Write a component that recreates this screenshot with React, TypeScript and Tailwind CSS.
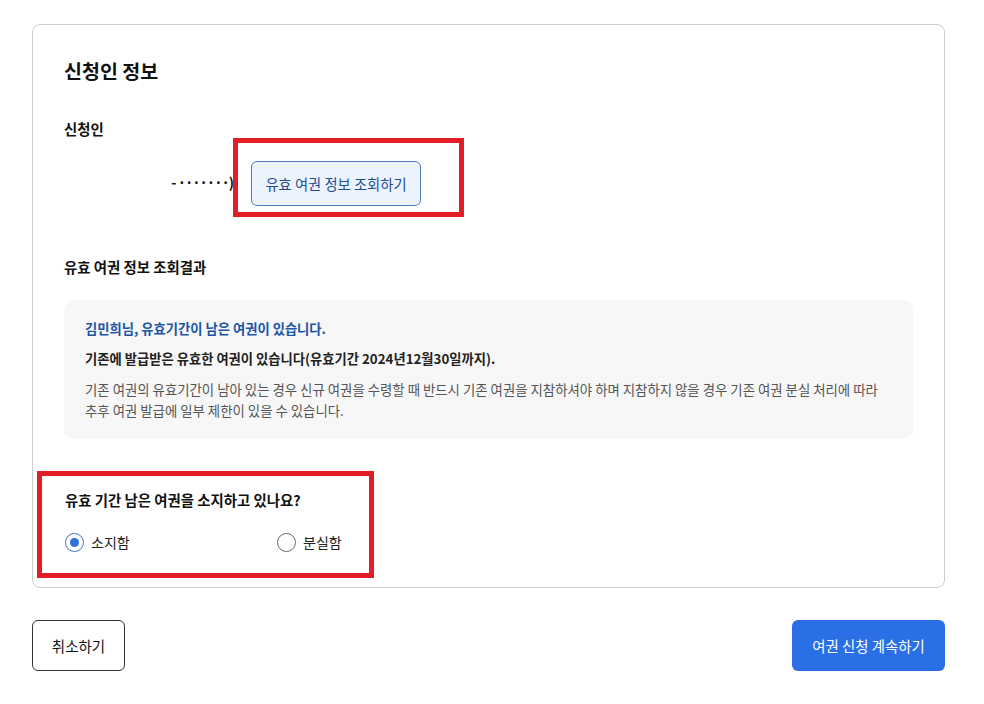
import React from "react";

const font = { fontFamily: '"Noto Sans CJK KR", "Noto Sans", sans-serif' };

function Radio({ checked, label }: { checked: boolean; label: string }) {
  return (
    <label className="flex items-center gap-[7px] h-5">
      <span
        className={
          checked
            ? "w-[19px] h-[19px] rounded-full border-[1.5px] border-[#3a73d8] flex items-center justify-center bg-white"
            : "w-[19px] h-[19px] rounded-full border border-[#6b6b6b] bg-white"
        }
      >
        {checked && <span className="w-[9px] h-[9px] rounded-full bg-[#2e6fe0]" />}
      </span>
      <span className="text-[14px] text-[#222] leading-5">{label}</span>
    </label>
  );
}

export default function App() {
  return (
    <div className="min-h-[704px] bg-white pt-6 pl-8 pr-[39px]" style={font}>
      <div className="w-[913px] border border-[#cfcfcf] rounded-[8px] pl-[31px] pr-[31px] pt-[33px] pb-[9px]">
        <h1 className="text-[19.5px] leading-[26px] font-bold text-[#111]">신청인 정보</h1>

        <div className="mt-[35px] text-[14.4px] leading-5 font-bold text-[#111]">신청인</div>

        <div className="flex items-center -mt-px">
          <div className="w-[169px] text-right text-[14px] font-bold text-[#111] pt-[9px] tracking-[-1px]">
            - ·······)
          </div>
          <div className="border-[5px] border-[#e31d25] pt-[18px] pb-[6px] pl-[13px] pr-[38px]">
            <button className="w-[170px] h-[45px] rounded-[6px] border border-[#4a7cc0] bg-[#ecf3fd] text-[14.3px] text-[#1d4d8f]">
              유효 여권 정보 조회하기
            </button>
          </div>
        </div>

        <div className="mt-[40px] text-[14.4px] leading-5 font-bold text-[#111]">유효 여권 정보 조회결과</div>

        <div className="mt-[23px] h-[139px] rounded-[10px] bg-[#f7f7f7] pl-[21px] pr-5 pt-[19px]">
          <p className="text-[13.3px] leading-5 font-bold text-[#1a55a6]">
            김민희님, 유효기간이 남은 여권이 있습니다.
          </p>
          <p className="mt-[10px] text-[13.3px] leading-5 font-bold text-[#222]">
            기존에 발급받은 유효한 여권이 있습니다(유효기간 2024년12월30일까지).
          </p>
          <p className="mt-[10px] text-[13.4px] leading-[21px] text-[#555] whitespace-nowrap">
            기존 여권의 유효기간이 남아 있는 경우 신규 여권을 수령할 때 반드시 기존 여권을 지참하셔야 하며 지참하지 않을 경우 기존 여권 분실 처리에 따라
            <br />
            추후 여권 발급에 일부 제한이 있을 수 있습니다.
          </p>
        </div>

        <div className="mt-[32px] -ml-[27px] w-[337px] border-[5px] border-[#e31d25] pl-[23px] pt-[14px] pb-[21px]">
          <div className="text-[14.4px] leading-5 font-bold text-[#111]">유효 기간 남은 여권을 소지하고 있나요?</div>
          <div className="mt-[22px] flex">
            <div className="w-[212px]">
              <Radio checked label="소지함" />
            </div>
            <Radio checked={false} label="분실함" />
          </div>
        </div>
      </div>

      <div className="w-[913px] mt-[32px] flex justify-between">
        <button className="w-[93px] h-[51px] rounded-[6px] border border-[#333] bg-white text-[14.5px] text-[#111]">
          취소하기
        </button>
        <button className="w-[153px] h-[51px] rounded-[6px] bg-[#2a6fe6] text-[14.4px] text-white">
          여권 신청 계속하기
        </button>
      </div>
    </div>
  );
}
